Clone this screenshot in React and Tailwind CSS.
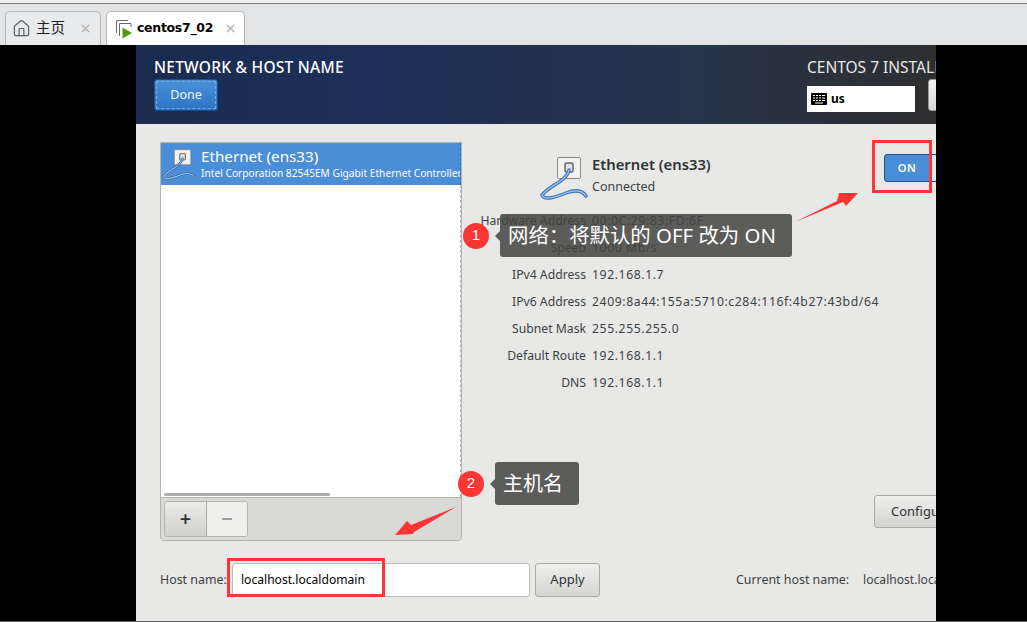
import React from 'react';
import { House, X } from 'lucide-react';

const DETAILS = [
  ['Hardware Address', '00:0C:29:83:FD:6F'],
  ['Speed', '1000 Mb/s'],
  ['IPv4 Address', '192.168.1.7'],
  ['IPv6 Address', '2409:8a44:155a:5710:c284:116f:4b27:43bd/64'],
  ['Subnet Mask', '255.255.255.0'],
  ['Default Route', '192.168.1.1'],
  ['DNS', '192.168.1.1'],
];

const CABLE = 'M29 13 C27 24 10 28 2 38 C4 44 16 40 26 36 C34 33 42 33 46 39';

const EthernetIcon = ({ className, cable = '#3f78bd', light = '#a9c6e8' }) => (
  <svg viewBox="0 0 48 44" className={className}>
    <rect x="17.5" y="0.5" width="23" height="21" rx="1.500" fill="#f2f2f0" stroke="#8a8a88" />
    <rect x="25" y="6" width="8" height="9" rx="1.500" fill="#e4e4e2" stroke="#66666a" strokeWidth="1.500" />
    <path d={CABLE} fill="none" stroke={cable} strokeWidth="3.500" strokeLinecap="round" />
    <path d={CABLE} fill="none" stroke={light} strokeWidth="1.200" strokeLinecap="round" />
  </svg>
);

const KeyboardIcon = () => (
  <svg viewBox="0 0 16 12" className="w-4 h-3">
    <rect width="16" height="12" rx="1" fill="#000" />
    <path d="M2 2.500h2M5 2.500h2M8 2.500h2M11 2.500h3M2 5h2M5 5h2M8 5h2M11 5h3M2 7.500h2M5 7.500h2M8 7.500h2M11 7.500h3M4 10h8" stroke="#fff" strokeWidth="1" />
  </svg>
);

const VmIcon = () => (
  <svg viewBox="0 0 20 20" className="w-[20px] h-[20px]">
    <path d="M3.500 14V1.500H15" fill="none" stroke="#6b6b6b" strokeWidth="1" />
    <path d="M6.500 17V4.500H18V8" fill="none" stroke="#6b6b6b" strokeWidth="1" />
    <path d="M9.500 8.500L19 14L9.500 19.500Z" fill="#4c9a12" />
  </svg>
);

const Bubble = ({ n, text, className, bubble }) => (
  <div className={`absolute flex items-center ${className}`}>
    <span className="w-[26px] h-[26px] rounded-full bg-[#fd3535] text-white text-[15px] flex items-center justify-center font-['Liberation_Sans',sans-serif]">{n}</span>
    <span className={`relative rounded-[3px] bg-[#434341]/85 text-white flex items-center whitespace-nowrap font-['Noto_Sans','Noto_Sans_CJK_SC',sans-serif] ${bubble}`}>
      <span className="absolute left-[-5px] top-1/2 -mt-[5px] w-0 h-0 border-y-[5px] border-y-transparent border-r-[5px] border-r-[#5c5c5a]" />
      {text}
    </span>
  </div>
);

export default function App() {
  return (
    <div className="relative w-[1027px] h-[622px] overflow-hidden flex flex-col bg-black font-['Noto_Sans','Noto_Sans_CJK_SC',sans-serif] text-[#2e3436]">
      <div className="h-[3px] shrink-0 bg-[#f0f0f0]" />
      {/* Workstation tab strip */}
      <div className="h-[42px] shrink-0 bg-[#e3e4e5] border-t border-[#7d7d7d] flex items-end pl-[5px] gap-[5px]">
        <div className="w-[96px] h-[34px] border border-b-0 border-[#b4b5b7] rounded-t-[5px] bg-[#e9eaeb] flex items-center pl-[6px] text-[14.500px] text-[#222] font-['Noto_Sans_CJK_SC',sans-serif]">
          <House className="w-[19px] h-[19px] text-[#55606a]" strokeWidth={1.5} />
          <span className="ml-[5px] mb-[4px]">主页</span>
          <X className="w-[13px] h-[13px] ml-auto mr-[8px] mb-[1px] text-[#b5b5b5]" strokeWidth={2.5} />
        </div>
        <div className="w-[139px] h-[34px] border border-b-0 border-[#b4b5b7] rounded-t-[5px] bg-white flex items-center pl-[6px]">
          <VmIcon />
          <span className="ml-[4px] text-[12.500px] font-bold text-black font-['DejaVu_Sans',sans-serif] tracking-[-0.3px]">centos7_02</span>
          <X className="w-[13px] h-[13px] ml-auto mr-[7px] mb-[1px] text-[#b5b5b5]" strokeWidth={2.5} />
        </div>
      </div>

      {/* Installer screen */}
      <div className="ml-[136px] w-[800px] h-[576px] shrink-0 flex flex-col overflow-hidden">
        <div className="h-[79px] shrink-0 overflow-hidden bg-[linear-gradient(90deg,#1a2b4e_0%,#1c3059_30%,#27344c_70%,#2e2e2e_100%)] flex">
          <div className="pl-[18px] pt-[12px] w-[671px] shrink-0">
            <h1 className="text-[15.500px] leading-[20px] font-medium text-white whitespace-nowrap tracking-[0.25px]">NETWORK &amp; HOST NAME</h1>
            <button className="mt-[2px] ml-0 w-[64px] h-[32px] rounded-[3px] bg-[linear-gradient(180deg,#4a90d9,#2d74c4)] border border-[#1c4f8c] text-[#eef4fb] text-[12.500px] outline-1 -outline-offset-3 outline-dashed outline-[#7aa9dd]">Done</button>
          </div>
          <div className="pt-[12px] w-[129px] shrink-0 whitespace-nowrap">
            <div className="text-[15.500px] leading-[20px] text-[#e8e8e8]">CENTOS 7 INSTALLATION</div>
            <div className="mt-[9px] flex">
              <div className="w-[108px] h-[26px] shrink-0 bg-white flex items-center pl-[4px] gap-[4px] text-[12px] font-bold text-black">
                <KeyboardIcon />us
              </div>
              <div className="ml-[13px] mt-[-7px] w-[40px] h-[32px] shrink-0 rounded-[3px] bg-[linear-gradient(180deg,#f2f2f0,#d8d8d5)] border border-[#999]" />
            </div>
          </div>
        </div>

        <div className="flex-1 bg-[#e8e8e6] pl-[24px] pt-[18px] flex flex-col min-h-0 overflow-hidden">
          <div className="flex h-[399px] shrink-0">
            {/* Device list */}
            <div className="w-[302px] h-full shrink-0 border border-[#b3b3b1] rounded-b-[4px] flex flex-col overflow-hidden">
              <div className="flex-1 relative bg-white">
                <div className="h-[42px] bg-[#4a8ed8] flex items-center text-white overflow-hidden border-r border-dashed border-[#2f6fb8]">
                  <EthernetIcon className="w-[34px] h-[32px] ml-[1px] mt-[1px] shrink-0" cable="#3a6fae" light="#c5d8ee" />
                  <div className="ml-[5px] whitespace-nowrap">
                    <div className="text-[15.200px] leading-[19px]">Ethernet (ens33)</div>
                    <div className="text-[10.200px] leading-[15px]">Intel Corporation 82545EM Gigabit Ethernet Controller (Copper)</div>
                  </div>
                </div>
                <div className="absolute left-[3px] bottom-[1px] w-[166px] h-[3px] rounded-full bg-[#a9adab]" />
                <div className="absolute right-0 top-[42px] bottom-0 border-r border-dashed border-[#b9b9b9]" />
              </div>
              <div className="h-[43px] shrink-0 bg-[#d9d9d7] border-t border-[#b3b3b1] pl-[3px] pt-[3px]">
                <div className="flex w-[84px] h-[36px] rounded-[3px] border border-[#b3b3b1] overflow-hidden">
                  <div className="w-[42px] bg-[linear-gradient(180deg,#ebebe9,#cfcfcd)] border-r border-[#a9a9a7] flex items-center justify-center text-[20px] leading-none font-semibold text-[#2e3436]">+</div>
                  <div className="flex-1 bg-[#efefed] flex items-center justify-center text-[20px] leading-none font-semibold text-[#9a9c9c]">−</div>
                </div>
              </div>
            </div>

            {/* Device details */}
            <div className="flex-1 min-w-0 flex flex-col text-[12.200px]">
              <div className="h-[65px] shrink-0 flex">
                <EthernetIcon className="w-[48px] h-[44px] ml-[78px] mt-[15px] shrink-0" />
                <div className="ml-[4px] pt-[12px] w-[120px] shrink-0 whitespace-nowrap">
                  <div className="text-[14.800px] leading-[20px] font-semibold">Ethernet (ens33)</div>
                  <div className="text-[12.500px] leading-[18px] mt-[4px] text-[#3c4244]">Connected</div>
                </div>
                <div className="ml-[172px] mt-[12px] flex h-[28px] shrink-0">
                  <div className="w-[46px] rounded-l-[3px] border border-[#1e508c] bg-[#4a8ed8] text-white text-[11px] font-semibold flex items-center justify-center tracking-[0.5px]">ON</div>
                  <div className="w-[30px] border border-l-0 border-[#1e508c] bg-[#e8e8e6]" />
                </div>
              </div>
              <div className="mt-px grid grid-cols-[124px_1fr] gap-x-[6px] auto-rows-[27px] items-center">
                {DETAILS.map(([label, value]) => (
                  <React.Fragment key={label}>
                    <div className="text-right whitespace-nowrap text-[#3c4244]">{label}</div>
                    <div className="whitespace-nowrap text-[#3c4244] tracking-[0.6px]">{value}</div>
                  </React.Fragment>
                ))}
              </div>
              <button className="mt-auto mb-[13px] ml-[412px] w-[110px] h-[33px] shrink-0 text-left pl-[16px] rounded-[3px] border border-[#a9a9a7] bg-[linear-gradient(180deg,#efefed,#d4d4d2)] text-[13px] whitespace-nowrap">Configure...</button>
            </div>
          </div>

          {/* Host name row */}
          <div className="mt-[22px] h-[34px] shrink-0 flex items-center text-[12.400px] whitespace-nowrap">
            <span className="w-[72px] shrink-0 text-[#3c4244]">Host name:</span>
            <div className="w-[298px] h-[34px] shrink-0 rounded-[3px] border border-[#b9b9b7] bg-white pl-[8px] flex items-center text-black text-[12.100px]">localhost.localdomain</div>
            <button className="ml-[5px] w-[65px] h-[34px] shrink-0 rounded-[3px] border border-[#a9a9a7] bg-[linear-gradient(180deg,#efefed,#d4d4d2)] text-[13px]">Apply</button>
            <span className="ml-[136px] shrink-0 text-[#3c4244]">Current host name:</span>
            <span className="ml-[14px] shrink-0 text-[#3c4244] text-[12.100px]">localhost.localdomain</span>
          </div>
        </div>
      </div>
      <div className="h-px bg-[#666]" />

      {/* Annotations on top of the screenshot */}
      <div className="absolute left-[872px] top-[140px] w-[60px] h-[53px] border-[3px] border-[#fd3535]" />
      <div className="absolute left-[227px] top-[558px] w-[158px] h-[39px] border-[3px] border-[#fd3535]" />
      <Bubble n="1" text="网络：将默认的 OFF 改为 ON" className="left-[463px] top-[214px] gap-[11px]" bubble="w-[292px] h-[43px] pl-[8px] text-[20.400px]" />
      <Bubble n="2" text="主机名" className="left-[458px] top-[462px] gap-[11px]" bubble="w-[84px] h-[43px] pl-[8px] text-[20px]" />
      <svg className="absolute left-[790px] top-[188px] w-[72px] h-[38px]" viewBox="0 0 72 38">
        <polygon points="5,34 47,13 49,5 68,5 56,18 53,14" fill="#fd3535" />
      </svg>
      <svg className="absolute left-[390px] top-[503px] w-[70px] h-[36px]" viewBox="0 0 70 36">
        <polygon points="66,4 21,22 17,18 5,32 23,31 24,29" fill="#fd3535" />
      </svg>
    </div>
  );
}
